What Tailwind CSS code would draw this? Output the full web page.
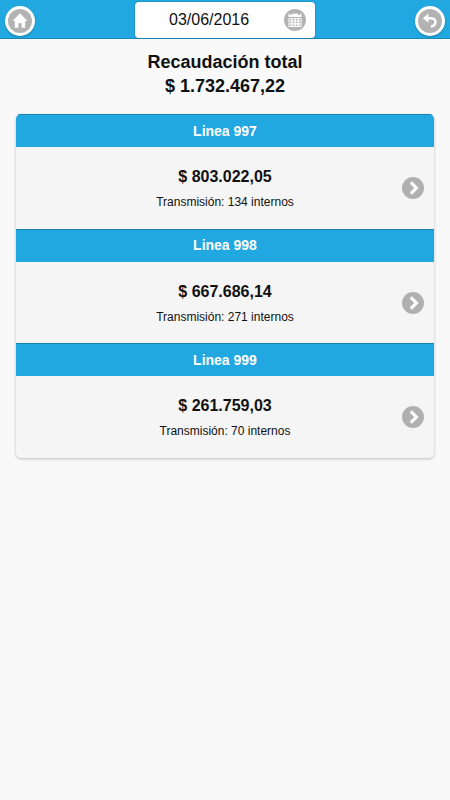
<!DOCTYPE html>
<html lang="es">
<head>
  <meta charset="UTF-8" />
  <meta name="viewport" content="width=device-width, initial-scale=1.0" />
  <title>Recaudación total</title>
  <script src="https://cdn.jsdelivr.net/npm/@tailwindcss/browser@4"></script>
</head>
<body class="bg-[#f9f9f9] text-[#111] min-h-screen font-['Liberation_Sans',Arial,sans-serif]">

  <!-- Header -->
  <header class="h-[39px] bg-[#22a8e0] border-b border-[#1b87bd] flex justify-between items-start px-[5px]">
    <a href="#" class="mt-[6px] w-[30px] h-[30px] rounded-full bg-white shadow-[0_1px_2px_rgba(0,0,0,0.25)] flex items-center justify-center">
      <svg class="w-6 h-6" viewBox="0 0 24 24">
        <circle cx="12" cy="12" r="12" fill="#b3b3b3" />
        <path d="M12 4.2L4.6 12h2.2v6.8h3.6v-4.6h3.2v4.6h3.6V12h2.2z" fill="#fff" />
      </svg>
    </a>
    <div class="mt-[2px] w-[180px] h-9 shrink-0 rounded bg-white shadow-[0_0_2px_rgba(0,0,0,0.3)] flex items-center justify-between pl-[34px] pr-[9px]">
      <span class="text-base leading-5">03/06/2016</span>
      <svg class="w-[22px] h-[22px]" viewBox="0 0 22 22">
        <circle cx="11" cy="11" r="11" fill="#b3b3b3" />
        <path d="M4.5 4.8h1.3V6h2V4.8h6.4V6h2V4.8h1.3V8h-13z" fill="#fff" />
        <path d="M4.5 9h13v9h-13z" fill="#fff" />
        <path d="M5.3 9.8h1.8v1.7H5.3zM8.5 9.8h1.8v1.7H8.5zM11.7 9.8h1.8v1.7h-1.8zM14.9 9.8h1.8v1.7h-1.8zM5.3 12.6h1.8v1.7H5.3zM8.5 12.6h1.8v1.7H8.5zM11.7 12.6h1.8v1.7h-1.8zM14.9 12.6h1.8v1.7h-1.8zM5.3 15.4h1.8v1.7H5.3zM8.5 15.4h1.8v1.7H8.5zM11.7 15.4h1.8v1.7h-1.8zM14.9 15.4h1.8v1.7h-1.8z" fill="#b3b3b3" />
      </svg>
    </div>
    <a href="#" class="mt-[6px] w-[30px] h-[30px] rounded-full bg-white shadow-[0_1px_2px_rgba(0,0,0,0.25)] flex items-center justify-center">
      <svg class="w-6 h-6" viewBox="0 0 24 24">
        <circle cx="12" cy="12" r="12" fill="#b3b3b3" />
        <path d="M9 9.2h4.6a3.9 3.9 0 0 1 3.9 3.9c0 2.4-1.6 3.9-4.5 4.3" stroke="#fff" stroke-width="2.5" fill="none" />
        <path d="M10.4 4.6v9.2L4.8 9.2z" fill="#fff" />
      </svg>
    </a>
  </header>

  <!-- Total -->
  <main class="px-4 pt-3">
    <h1 class="text-center text-lg leading-[23.5px] font-bold">Recaudación total<br>$ 1.732.467,22</h1>

    <!-- Lines -->
    <ul class="mt-4 h-[344px] rounded-[5px] overflow-hidden bg-[#f5f5f5] shadow-[0_1px_3px_rgba(0,0,0,0.25)] grid grid-rows-3 text-center">
      <li class="flex flex-col">
        <h2 class="h-[33px] shrink-0 bg-[#22a8e0] border-t border-[#1b82b5] text-white text-sm leading-8 font-bold">Linea 997</h2>
        <div class="grow relative pt-5">
          <p class="text-base leading-5 font-bold">$ 803.022,05</p>
          <p class="mt-2 text-xs leading-[14px]">Transmisión: 134 internos</p>
          <svg class="absolute right-[10px] top-[30px] w-[22px] h-[22px]" viewBox="0 0 22 22">
            <circle cx="11" cy="11" r="11" fill="#b0b0b0" />
            <path d="M8.8 5.3l5.6 5.7-5.6 5.7" stroke="#fff" stroke-width="3.2" fill="none" />
          </svg>
        </div>
      </li>
      <li class="flex flex-col">
        <h2 class="h-[33px] shrink-0 bg-[#22a8e0] border-t border-[#1b82b5] text-white text-sm leading-[31px] font-bold">Linea 998</h2>
        <div class="grow relative pt-5">
          <p class="text-base leading-5 font-bold">$ 667.686,14</p>
          <p class="mt-2 text-xs leading-[14px]">Transmisión: 271 internos</p>
          <svg class="absolute right-[10px] top-[30px] w-[22px] h-[22px]" viewBox="0 0 22 22">
            <circle cx="11" cy="11" r="11" fill="#b0b0b0" />
            <path d="M8.8 5.3l5.6 5.7-5.6 5.7" stroke="#fff" stroke-width="3.2" fill="none" />
          </svg>
        </div>
      </li>
      <li class="flex flex-col">
        <h2 class="h-[33px] shrink-0 bg-[#22a8e0] border-t border-[#1b82b5] text-white text-sm leading-8 font-bold">Linea 999</h2>
        <div class="grow relative pt-5">
          <p class="text-base leading-5 font-bold">$ 261.759,03</p>
          <p class="mt-2 text-xs leading-[14px]">Transmisión: 70 internos</p>
          <svg class="absolute right-[10px] top-[30px] w-[22px] h-[22px]" viewBox="0 0 22 22">
            <circle cx="11" cy="11" r="11" fill="#b0b0b0" />
            <path d="M8.8 5.3l5.6 5.7-5.6 5.7" stroke="#fff" stroke-width="3.2" fill="none" />
          </svg>
        </div>
      </li>
    </ul>
  </main>

</body>
</html>
